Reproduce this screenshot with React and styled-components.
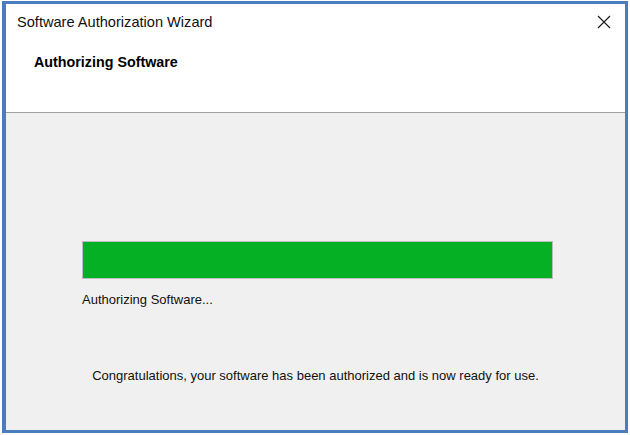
import React from 'react'
import styled, { createGlobalStyle } from 'styled-components'

const GlobalStyle = createGlobalStyle`
  html, body {
    margin: 0;
    padding: 0;
    background: #ffffff;
  }
  body {
    font-family: "Liberation Sans", Arial, sans-serif;
    color: #000;
  }
`

function CloseIcon() {
  return (
    <svg width="14" height="14" viewBox="0 0 14 14">
      <path d="M1 1 L13 13 M13 1 L1 13" stroke="#1e1e1e" strokeWidth="1.2" fill="none" />
    </svg>
  )
}

function ProgressBar({ value }) {
  return (
    <Track>
      <Fill style={{ width: `${value}%` }} />
    </Track>
  )
}

export default function App() {
  return (
    <>
      <GlobalStyle />
      <Window>
        <Header>
          <TitleRow>
            <Title>Software Authorization Wizard</Title>
            <CloseButton aria-label="Close">
              <CloseIcon />
            </CloseButton>
          </TitleRow>
          <Heading>Authorizing Software</Heading>
        </Header>
        <Body>
          <ProgressBar value={100} />
          <Status>Authorizing Software...</Status>
          <Message>Congratulations, your software has been authorized and is now ready for use.</Message>
        </Body>
      </Window>
    </>
  )
}

const Window = styled.div`
  box-sizing: border-box;
  margin: 1px 2px 0 2px;
  width: 626px;
  height: 432px;
  border: 3px solid #4a7cbf;
  border-left-width: 4px;
  display: flex;
  flex-direction: column;
  overflow: hidden;
`

const Header = styled.div`
  background: #ffffff;
  height: 108px;
  border-bottom: 1px solid #a0a0a0;
  flex-shrink: 0;
`

const TitleRow = styled.div`
  height: 36px;
  display: flex;
  align-items: center;
  justify-content: space-between;
  padding: 0 11px 0 11px;
`

const Title = styled.span`
  font-size: 14.6px;
  color: #111;
`

const CloseButton = styled.button`
  border: none;
  background: transparent;
  padding: 0;
  width: 14px;
  height: 14px;
  display: flex;
  align-items: center;
  justify-content: center;
  margin-right: 3px;
  cursor: pointer;
`

const Heading = styled.div`
  margin-top: 14px;
  padding-left: 28px;
  font-size: 14.3px;
  font-weight: bold;
  line-height: 16px;
`

const Body = styled.div`
  flex: 1;
  background: #f0f0f0;
  display: flex;
  flex-direction: column;
  padding: 128px 72px 0 76px;
`

const Track = styled.div`
  box-sizing: border-box;
  width: 471px;
  height: 38px;
  border: 1px solid #bcbcbc;
  background: #e6e6e6;
`

const Fill = styled.div`
  height: 100%;
  background: #06b025;
`

const Status = styled.div`
  margin-top: 13px;
  font-size: 13px;
  line-height: 16px;
  color: #111;
`

const Message = styled.div`
  margin-top: 60px;
  margin-left: -4px;
  text-align: center;
  font-size: 13px;
  line-height: 16px;
  color: #111;
`
